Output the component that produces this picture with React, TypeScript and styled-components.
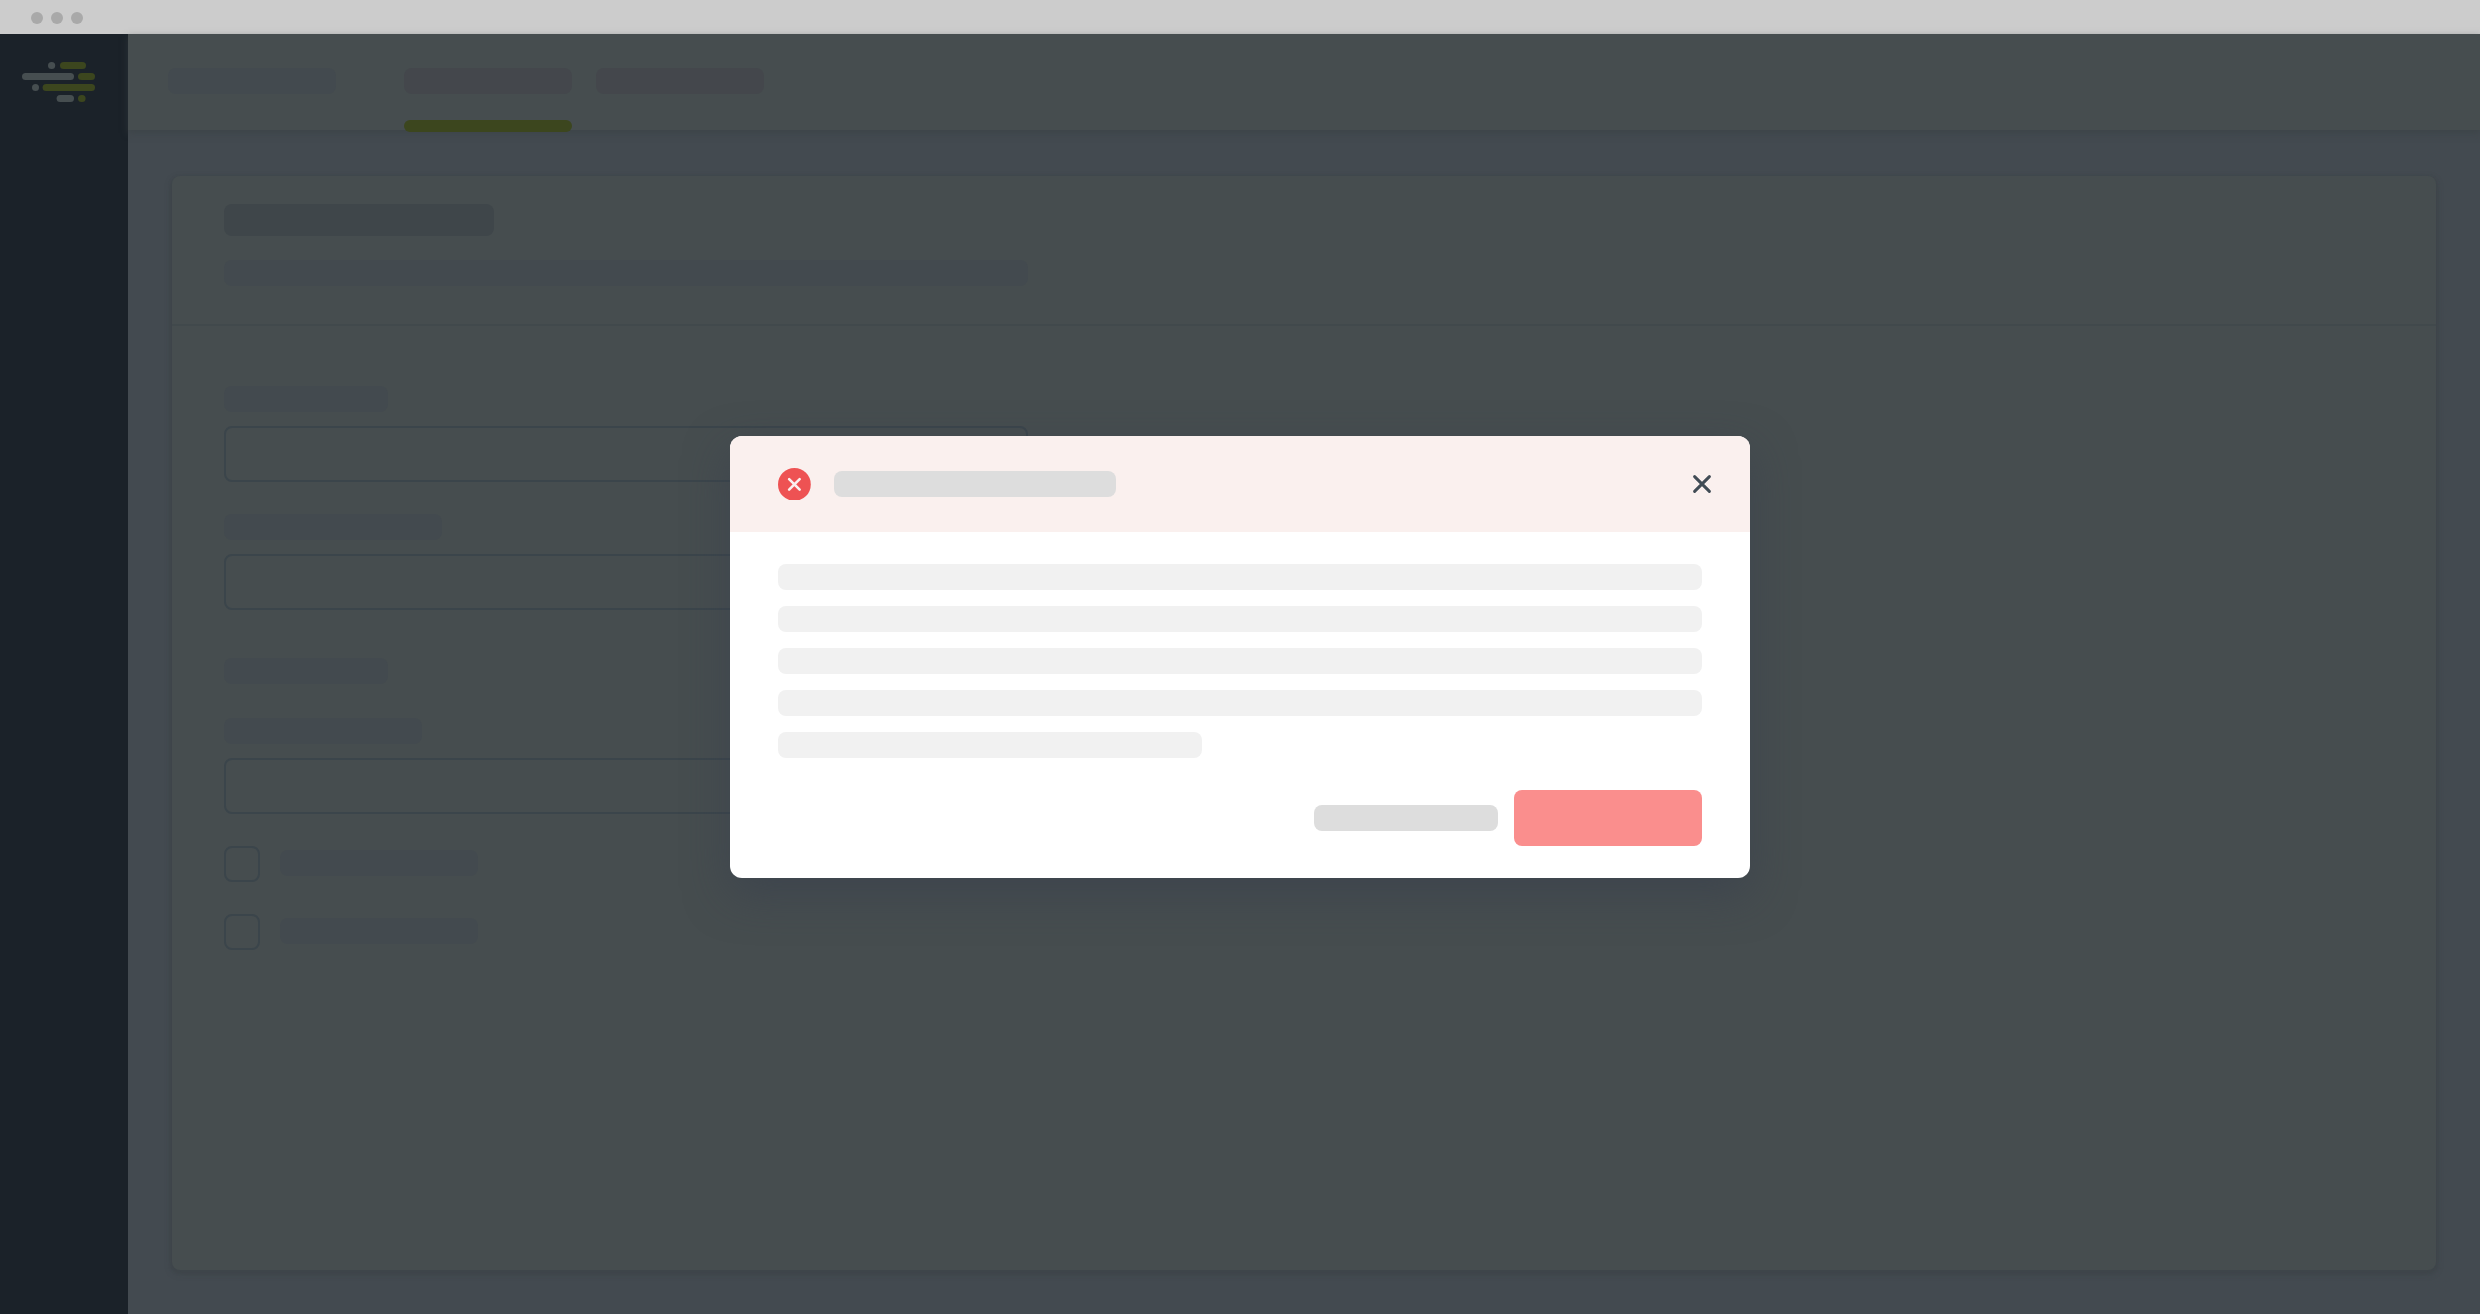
import React from "react";
import styled, { createGlobalStyle } from "styled-components";

const Global = createGlobalStyle`
  *, *::before, *::after { box-sizing: border-box; }
  body { margin: 0; background: #434a50; font-family: "Liberation Sans", sans-serif; }
`;

const Window = styled.div`
  display: flex;
  flex-direction: column;
  width: 100%;
  height: 100vh;
  overflow: hidden;
`;

const TitleBar = styled.div`
  flex: none;
  display: flex;
  align-items: center;
  gap: 8px;
  height: 34px;
  padding: 2px 31px 0;
  background: #cccccc;
`;

const WindowDot = styled.span`
  width: 12px;
  height: 12px;
  border-radius: 50%;
  background: #a9a9a9;
`;

const Shell = styled.div`
  flex: 1;
  display: flex;
  min-height: 0;
`;

const Sidebar = styled.aside`
  flex: none;
  width: 128px;
  padding: 28px 0 0 22px;
  background: #1b2229;
`;

const Main = styled.main`
  flex: 1;
  display: flex;
  flex-direction: column;
  min-width: 0;
  background: #434a50;
`;

const Header = styled.header`
  flex: none;
  display: flex;
  height: 96px;
  padding: 34px 40px 0;
  background: #464d4f;
  box-shadow: 0 3px 7px rgba(56, 64, 66, 0.55);
`;

const Tabs = styled.nav`
  display: flex;
  gap: 24px;
  margin-left: 68px;
`;

const Tab = styled.div`
  display: flex;
  flex-direction: column;
  gap: 26px;
`;

const TabMarker = styled.div`
  flex: none;
  height: 12px;
  border-radius: 6px;
  background: #3c461e;
`;

const tones = {
  subtle: "#434a4f",
  tab: "#44474c",
  heading: "#3f464a",
  text: "#f1f1f1",
  strong: "#dddddd",
};

const Placeholder = styled.div<{ $w?: number; $h?: number; $tone?: keyof typeof tones }>`
  flex: none;
  width: ${(p) => (p.$w ? `${p.$w}px` : "100%")};
  height: ${(p) => p.$h ?? 26}px;
  border-radius: 8px;
  background: ${(p) => tones[p.$tone ?? "subtle"]};
`;

const Card = styled.section`
  flex: 1;
  margin: 46px 44px 44px;
  border-radius: 8px;
  background: #464d4f;
  box-shadow: 0 2px 2px 2px rgba(62, 69, 73, 0.6), 0 3px 6px 1px rgba(58, 66, 70, 0.35);
`;

const CardHeader = styled.div`
  display: flex;
  flex-direction: column;
  gap: 24px;
  height: 150px;
  padding: 28px 52px 0;
  border-bottom: 2px solid #41494c;
`;

const Form = styled.div`
  display: flex;
  flex-direction: column;
  align-items: flex-start;
  padding: 60px 52px 0;
`;

const Field = styled.div`
  display: flex;
  flex-direction: column;
  gap: 14px;
  margin-bottom: 32px;
`;

const Input = styled.div`
  width: 804px;
  height: 56px;
  border: 2px solid #3b454b;
  border-radius: 8px;
`;

const SectionLabel = styled.div`
  margin: 16px 0 34px;
`;

const CheckRow = styled.div`
  display: flex;
  gap: 20px;
  margin-bottom: 32px;
  padding-right: 20px;
`;

const Checkbox = styled.div`
  width: 36px;
  height: 36px;
  border: 2px solid #3b454b;
  border-radius: 8px;
`;

const CheckLabel = styled.div`
  padding-top: 4px;
`;

const Overlay = styled.div`
  position: fixed;
  inset: 0;
  display: flex;
  align-items: center;
  justify-content: center;
`;

const Dialog = styled.div`
  width: 1020px;
  height: 442px;
  border-radius: 12px;
  overflow: hidden;
  background: #ffffff;
  box-shadow: 0 16px 44px rgba(54, 62, 76, 0.55);
`;

const DialogHeader = styled.div`
  display: flex;
  align-items: center;
  height: 96px;
  padding: 0 38px 0 48px;
  background: #faf0ee;
`;

const ErrorIcon = styled.svg`
  flex: none;
  width: 32.8px;
  height: 32.8px;
  margin-right: 23.7px;
`;

const CloseIcon = styled.svg`
  flex: none;
  width: 20px;
  height: 20px;
  margin-left: auto;
`;

const DialogBody = styled.div`
  display: flex;
  flex-direction: column;
  gap: 16px;
  padding: 32px 48px;
`;

const DialogActions = styled.div`
  display: flex;
  align-items: center;
  justify-content: flex-end;
  gap: 16px;
  padding: 0 48px;
`;

const DangerButton = styled.div`
  width: 188px;
  height: 56px;
  border-radius: 8px;
  background: #fa8e8d;
`;

function Logo() {
  return (
    <svg width="74" height="40" viewBox="0 0 74 40" display="block">
      <g fill="#464e50">
        <rect x="26" y="0" width="7.2" height="7" rx="3.5" />
        <rect x="0" y="11" width="52" height="7" rx="3.5" />
        <rect x="10" y="22" width="7" height="7" rx="3.5" />
        <rect x="34.6" y="33" width="17.4" height="7" rx="3.5" />
      </g>
      <g fill="#3c461e">
        <rect x="38" y="0" width="26" height="7" rx="3.5" />
        <rect x="56" y="11" width="17" height="7" rx="3.5" />
        <rect x="20.6" y="22" width="52.4" height="7" rx="3.5" />
        <rect x="56" y="33" width="7.6" height="7" rx="3.5" />
      </g>
    </svg>
  );
}

export default function App() {
  return (
    <>
      <Global />
      <Window>
        <TitleBar>
          <WindowDot />
          <WindowDot />
          <WindowDot />
        </TitleBar>
        <Shell>
          <Sidebar>
            <Logo />
          </Sidebar>
          <Main>
            <Header>
              <Placeholder $w={168} />
              <Tabs>
                <Tab>
                  <Placeholder $w={168} $tone="tab" />
                  <TabMarker />
                </Tab>
                <Tab>
                  <Placeholder $w={168} $tone="tab" />
                </Tab>
              </Tabs>
            </Header>
            <Card>
              <CardHeader>
                <Placeholder $w={270} $h={32} $tone="heading" />
                <Placeholder $w={804} />
              </CardHeader>
              <Form>
                <Field>
                  <Placeholder $w={164} />
                  <Input />
                </Field>
                <Field>
                  <Placeholder $w={218} />
                  <Input />
                </Field>
                <SectionLabel>
                  <Placeholder $w={164} />
                </SectionLabel>
                <Field>
                  <Placeholder $w={198} />
                  <Input />
                </Field>
                {[0, 1].map((row) => (
                  <CheckRow key={row}>
                    <Checkbox />
                    <CheckLabel>
                      <Placeholder $w={198} />
                    </CheckLabel>
                  </CheckRow>
                ))}
              </Form>
            </Card>
          </Main>
        </Shell>
      </Window>
      <Overlay>
        <Dialog role="dialog">
          <DialogHeader>
            <ErrorIcon viewBox="0 0 33 33">
              <circle cx="16.5" cy="16.5" r="16.5" fill="#ee5253" />
              <path d="M11.2 11.2 21.8 21.8M21.8 11.2 11.2 21.8" stroke="#faf0ee" strokeWidth="2.6" strokeLinecap="round" />
            </ErrorIcon>
            <Placeholder $w={282} $tone="strong" />
            <CloseIcon viewBox="0 0 20 20">
              <path d="M2.6 2.6 17.4 17.4M17.4 2.6 2.6 17.4" stroke="#414c55" strokeWidth="3" strokeLinecap="round" />
            </CloseIcon>
          </DialogHeader>
          <DialogBody>
            <Placeholder $tone="text" />
            <Placeholder $tone="text" />
            <Placeholder $tone="text" />
            <Placeholder $tone="text" />
            <Placeholder $tone="text" $w={424} />
          </DialogBody>
          <DialogActions>
            <Placeholder $w={184} $tone="strong" />
            <DangerButton />
          </DialogActions>
        </Dialog>
      </Overlay>
    </>
  );
}
